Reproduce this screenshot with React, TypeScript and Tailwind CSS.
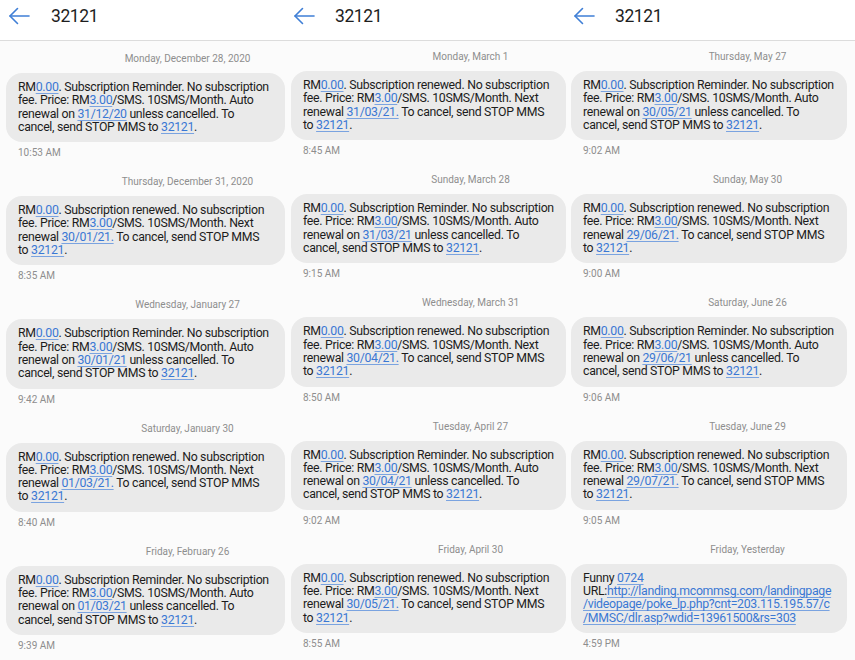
type Seg = string | { link: string }
type Msg = { date: string; lines: Seg[][]; time: string }

const reminder = (date: string, renew: string, time: string): Msg => ({
  date,
  time,
  lines: [
    ['RM', { link: '0.00' }, '. Subscription Reminder. No subscription'],
    ['fee. Price: RM', { link: '3.00' }, '/SMS. 10SMS/Month. Auto'],
    ['renewal on ', { link: renew }, ' unless cancelled. To'],
    ['cancel, send STOP MMS to ', { link: '32121' }, '.'],
  ],
})

const renewed = (date: string, renew: string, time: string): Msg => ({
  date,
  time,
  lines: [
    ['RM', { link: '0.00' }, '. Subscription renewed. No subscription'],
    ['fee. Price: RM', { link: '3.00' }, '/SMS. 10SMS/Month. Next'],
    ['renewal ', { link: renew }, ' To cancel, send STOP MMS'],
    ['to ', { link: '32121' }, '.'],
  ],
})

// each panel is a separate phone screenshot, cropped a little differently
const columns: {
  cls: string
  head: string
  date: string
  msgs: Msg[]
}[] = [
  {
    cls: 'w-[288px] pl-[6px] pr-[3px] pt-[12px]',
    head: 'pl-[8px] gap-[21px]',
    date: 'pl-[84px]',
    msgs: [
      reminder('Monday, December 28, 2020', '31/12/20', '10:53 AM'),
      renewed('Thursday, December 31, 2020', '30/01/21.', '8:35 AM'),
      reminder('Wednesday, January 27', '30/01/21', '9:42 AM'),
      renewed('Saturday, January 30', '01/03/21.', '8:40 AM'),
      reminder('Friday, February 26', '01/03/21', '9:39 AM'),
    ],
  },
  {
    cls: 'w-[280px] pl-[3px] pr-[2px] pt-[10px]',
    head: 'pl-[5px] gap-[20px]',
    date: 'pl-[84px]',
    msgs: [
      renewed('Monday, March 1', '31/03/21.', '8:45 AM'),
      reminder('Sunday, March 28', '31/03/21', '9:15 AM'),
      renewed('Wednesday, March 31', '30/04/21.', '8:50 AM'),
      reminder('Tuesday, April 27', '30/04/21', '9:02 AM'),
      renewed('Friday, April 30', '30/05/21.', '8:55 AM'),
    ],
  },
  {
    cls: 'w-[287px] pl-[3px] pr-[8px] pt-[10px]',
    head: 'pl-[5px] gap-[20px]',
    date: 'pl-[77px]',
    msgs: [
      reminder('Thursday, May 27', '30/05/21', '9:02 AM'),
      renewed('Sunday, May 30', '29/06/21.', '9:00 AM'),
      reminder('Saturday, June 26', '29/06/21', '9:06 AM'),
      renewed('Tuesday, June 29', '29/07/21.', '9:05 AM'),
      {
        date: 'Friday, Yesterday',
        time: '4:59 PM',
        lines: [
          ['Funny ', { link: '0724' }],
          ['URL:', { link: 'http://landing.mcommsg.com/landingpage' }],
          [{ link: '/videopage/poke_lp.php?cnt=203.115.195.57/c' }],
          [{ link: '/MMSC/dlr.asp?wdid=13961500&rs=303' }],
        ],
      },
    ],
  },
]

function BackArrow() {
  return (
    <svg width="22" height="18" viewBox="0 0 22 18" fill="none" stroke="#3f7fd6" strokeWidth="1.6" strokeLinecap="round" strokeLinejoin="round">
      <path d="M21 9H2" />
      <path d="M9.5 1.5L2 9l7.5 7.5" />
    </svg>
  )
}

function Bubble({ msg, datePad }: { msg: Msg; datePad: string }) {
  return (
    <div className="flex flex-col shrink-0 mb-[17px]">
      <div className={`${datePad} text-center text-[10px] leading-[12px] text-[#8e8e8e]`}>{msg.date}</div>
      <div className="mt-[8px] rounded-[16px] bg-[#eaeaea] px-[12px] py-[8px] text-[12.3px] leading-[13.3px] tracking-[-0.3px] text-[#1c1c1c]">
        {msg.lines.map((line, i) => (
          <div key={i} className="whitespace-nowrap">
            {line.map((s, j) =>
              typeof s === 'string' ? (
                <span key={j}>{s}</span>
              ) : (
                <span key={j} className="text-[#3a78d4] underline decoration-[#7aa3e0] underline-offset-[2px]">
                  {s.link}
                </span>
              ),
            )}
          </div>
        ))}
      </div>
      <div className="mt-[5px] pl-[12px] text-[10px] leading-[12px] text-[#8e8e8e]">{msg.time}</div>
    </div>
  )
}

export default function App() {
  return (
    <div className="flex w-[855px] h-[660px] overflow-hidden bg-[#fbfbfb] font-['Roboto',sans-serif]">
      {columns.map((col, ci) => (
        <div key={ci} className="flex flex-col shrink-0">
          <div className={`flex shrink-0 items-center h-[41px] pb-[8px] border-b border-[#dcdcdc] bg-white ${col.head}`}>
            <BackArrow />
            <span className="text-[17.5px] tracking-[-0.4px] text-[#1e1e1e]">32121</span>
          </div>
          <div className={`flex flex-col shrink-0 ${col.cls}`}>
            {col.msgs.map((m, i) => (
              <Bubble key={i} msg={m} datePad={col.date} />
            ))}
          </div>
        </div>
      ))}
    </div>
  )
}
